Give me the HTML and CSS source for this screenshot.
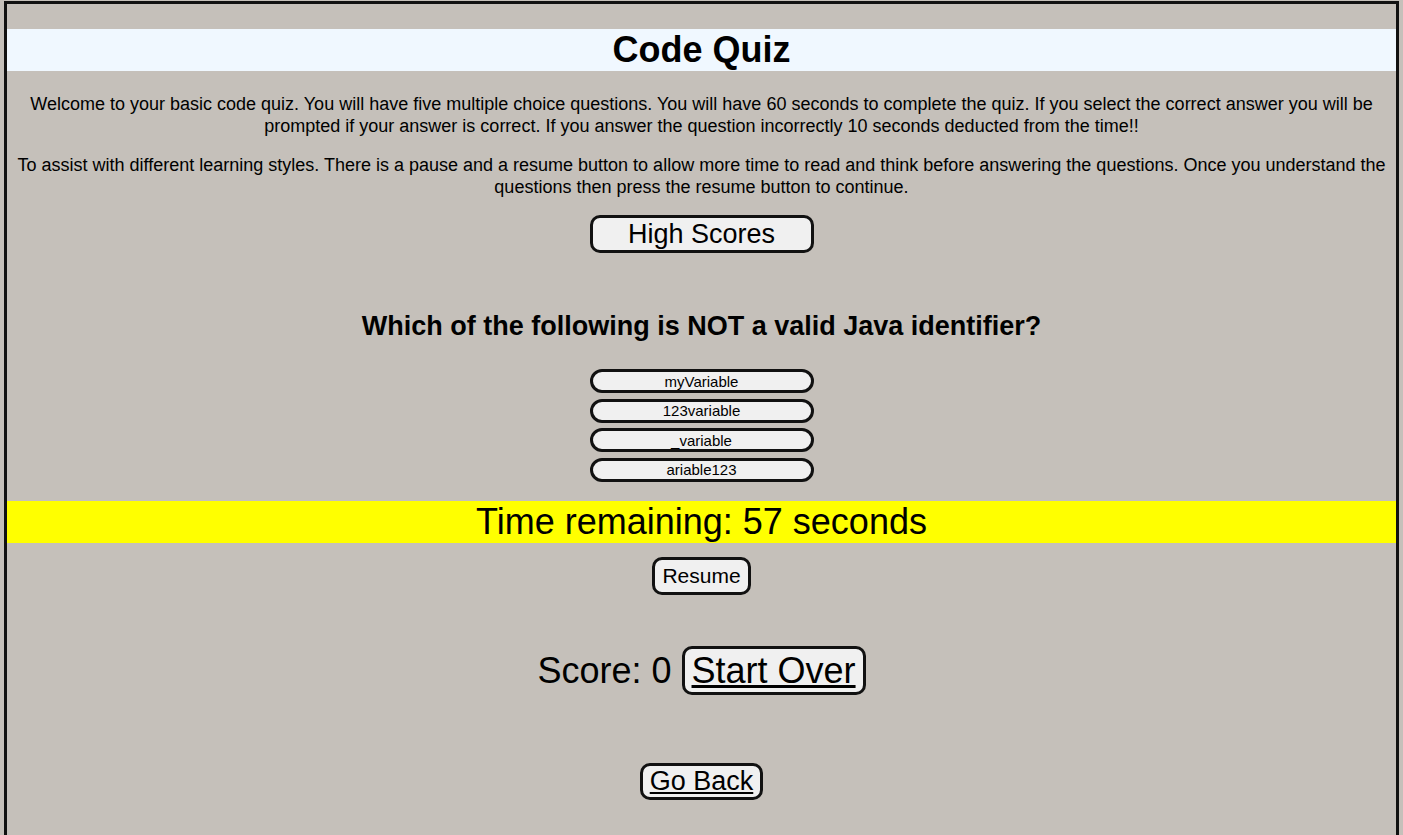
FILE: index.html
```html
<!DOCTYPE html>
<html lang="en">
<head>
<meta charset="utf-8">
<title>Code Quiz</title>
<link rel="stylesheet" href="styles.css">
</head>
<body>
<main class="frame">
  <header class="title-bar">
    <h1 class="title">Code Quiz</h1>
  </header>
  <section class="intro">
    <p class="intro-text">Welcome to your basic code quiz. You will have five multiple choice questions. You will have 60 seconds to complete the quiz. If you select the correct answer you will be prompted if your answer is correct. If you answer the question incorrectly 10 seconds deducted from the time!!</p>
    <p class="intro-text">To assist with different learning styles. There is a pause and a resume button to allow more time to read and think before answering the questions. Once you understand the questions then press the resume button to continue.</p>
  </section>
  <div class="center-row high-row">
    <button class="btn btn-high">High Scores</button>
  </div>
  <section class="quiz">
    <h2 class="question">Which of the following is NOT a valid Java identifier?</h2>
    <div class="answers">
      <button class="btn btn-answer">myVariable</button>
      <button class="btn btn-answer">123variable</button>
      <button class="btn btn-answer">_variable</button>
      <button class="btn btn-answer">ariable123</button>
    </div>
  </section>
  <div class="timer">Time remaining: 57 seconds</div>
  <div class="center-row resume-row">
    <button class="btn btn-resume">Resume</button>
  </div>
  <div class="score-row">Score: 0 <button class="btn btn-link btn-big">Start Over</button></div>
  <div class="center-row back-row">
    <button class="btn btn-link btn-back">Go Back</button>
  </div>
</main>
</body>
</html>
```

FILE: styles.css
```css
html {
  background: #c5c0ba;
}

body {
  margin: 0;
  font-family: Arial, "Liberation Sans", sans-serif;
  color: #000;
}

.frame {
  margin: 1px 4px 0;
  border: 3px solid #111;
  border-bottom: none;
  padding-bottom: 35px;
  background: #c5c0ba;
}

.title-bar {
  margin-top: 25px;
  background: #f0f8ff;
}

.title {
  margin: 0;
  font-size: 36px;
  line-height: 42px;
  font-weight: bold;
  text-align: center;
}

.intro {
  padding: 0 8px;
}

.intro-text {
  margin: 22px 0 0;
  font-size: 18px;
  line-height: 22px;
  text-align: center;
}

.intro-text + .intro-text {
  margin-top: 17px;
}

.center-row {
  display: flex;
  justify-content: center;
}

.btn {
  font-family: Arial, "Liberation Sans", sans-serif;
  color: #000;
  background: #f0f0f0;
  border: 3px solid #111;
  border-radius: 10px;
  padding: 1px 6px;
  box-sizing: border-box;
  cursor: pointer;
}

.high-row {
  margin-top: 17px;
}

.btn-high {
  width: 224px;
  height: 38px;
  font-size: 27px;
  line-height: 30px;
  padding: 1px 6px;
}

.question {
  margin: 57.5px 0 0;
  font-size: 27px;
  line-height: 31px;
  font-weight: bold;
  text-align: center;
}

.answers {
  margin-top: 27.5px;
  display: flex;
  flex-direction: column;
  align-items: center;
  gap: 5.5px;
}

.btn-answer {
  width: 224px;
  height: 24px;
  font-size: 15px;
  line-height: 16px;
  padding: 1px 6px 0;
  border-radius: 12px;
}

.timer {
  margin-top: 19px;
  background: #ffff00;
  font-size: 36px;
  line-height: 42px;
  text-align: center;
}

.resume-row {
  margin-top: 14px;
}

.btn-resume {
  height: 38px;
  font-size: 21px;
  line-height: 24px;
  padding: 3px 7px;
}

.score-row {
  margin-top: 51px;
  font-size: 36px;
  line-height: 49px;
  text-align: center;
}

.btn-link {
  text-decoration: underline;
}

.btn-big {
  height: 49px;
  font-size: 36px;
  line-height: 41px;
  padding: 1px 7px;
  vertical-align: top;
}

.back-row {
  margin-top: 68px;
}

.btn-back {
  height: 37px;
  font-size: 27px;
  line-height: 29px;
  padding: 1px 7px;
}
```
